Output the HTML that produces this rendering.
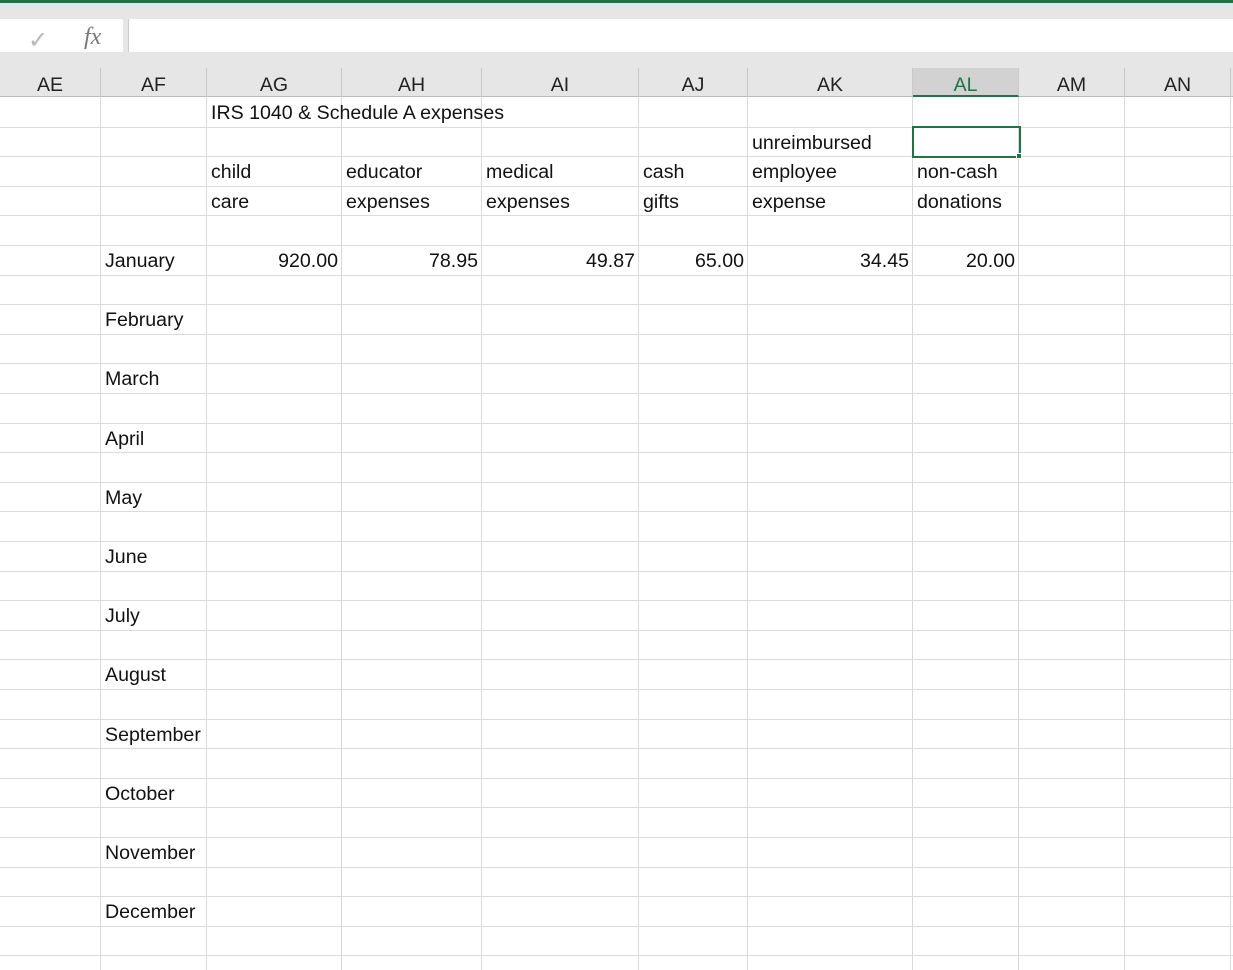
<!DOCTYPE html><html><head><style>
*{margin:0;padding:0;box-sizing:border-box}
body{width:1233px;height:970px;overflow:hidden;background:#fff;font-family:"Liberation Sans",sans-serif;position:relative}
.a{position:absolute}
.t{position:absolute;font-size:19.6px;color:#111;white-space:nowrap;line-height:29.6px;margin-top:2px}
.h{position:absolute;top:68px;height:29px;font-size:19.5px;color:#222;text-align:center;line-height:35px;border-right:1px solid #c8c8c8}
</style></head><body>
<div class="a" style="left:0;top:0;width:1233px;height:3px;background:#217346"></div>
<div class="a" style="left:0;top:3px;width:1233px;height:94px;background:#e6e6e6"></div>
<div class="a" style="left:0;top:19px;width:123px;height:33px;background:#fff"></div>
<div class="a" style="left:128px;top:19px;width:1105px;height:33px;background:#fff;border-left:1px solid #ccc"></div>
<div class="a" style="left:28px;top:26px;font-size:24px;color:#b8b8b8">✓</div>
<div class="a" style="left:84px;top:24px;font-size:24px;font-family:'Liberation Serif',serif;font-style:italic;color:#777">fx</div>
<div class="a" style="left:0;top:96px;width:1233px;height:1px;background:#bbb"></div>
<div id="g"></div>
<script>
var cols=[0,101,207,342,482,639,748,913,1019,1125,1231];
var names=["AE","AF","AG","AH","AI","AJ","AK","AL","AM","AN"];
var h="";
for(var i=0;i<10;i++){var w=cols[i+1]-cols[i];
h+='<div class="h" style="left:'+cols[i]+'px;width:'+w+'px;'+(i==7?'background:#d2d2d2;color:#217346;border-bottom:2px solid #217346;':'')+'">'+names[i]+'</div>';
h+='<div class="a" style="left:'+(cols[i+1]-1)+'px;top:97px;width:1px;height:873px;background:#d9d9d9"></div>';}
for(var r=1;r<30;r++){h+='<div class="a" style="left:0;top:'+(97+r*29.6)+'px;width:1233px;height:1px;background:#dcdcdc"></div>';}
function T(c,r,s,right){var y=97+r*29.6;
if(right)h+='<div class="t" style="top:'+y+'px;left:'+cols[c]+'px;width:'+(cols[c+1]-cols[c]-4)+'px;text-align:right">'+s+'</div>';
else h+='<div class="t" style="top:'+y+'px;left:'+(cols[c]+4)+'px">'+s+'</div>';}
T(2,0,"IRS 1040 &amp; Schedule A expenses");
T(6,1,"unreimbursed");
T(2,2,"child");T(3,2,"educator");T(4,2,"medical");T(5,2,"cash");T(6,2,"employee");T(7,2,"non-cash");
T(2,3,"care");T(3,3,"expenses");T(4,3,"expenses");T(5,3,"gifts");T(6,3,"expense");T(7,3,"donations");
var m=["January","February","March","April","May","June","July","August","September","October","November","December"];
for(var k=0;k<12;k++)T(1,5+2*k,m[k]);
var v=["920.00","78.95","49.87","65.00","34.45","20.00"];
for(var k=0;k<6;k++)T(2+k,5,v[k],1);
h+='<div class="a" style="left:912px;top:126px;width:109px;height:32px;border:2px solid #217346"></div>';
h+='<div class="a" style="left:1016px;top:153px;width:6px;height:6px;background:#217346;border:1px solid #fff"></div>';
document.getElementById("g").innerHTML=h;
</script>
</body></html>
